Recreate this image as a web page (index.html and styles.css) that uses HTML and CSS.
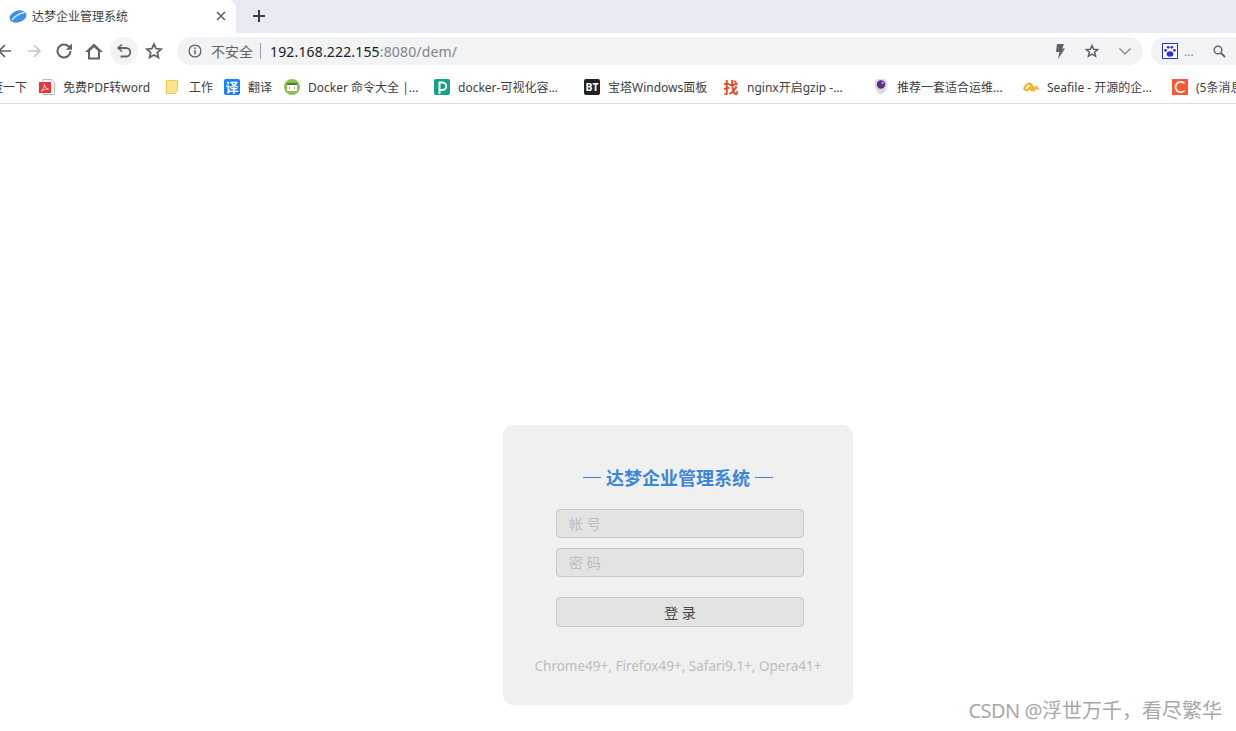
FILE: index.html
```html
<!DOCTYPE html>
<html lang="zh-CN">
<head>
  <meta charset="UTF-8" />
  <title>达梦企业管理系统</title>
  <link rel="stylesheet" href="styles.css">
</head>
<body>

<div class="tabstrip">
  <div class="tab">
    <svg class="tab-icon" width="18" height="15" viewBox="0 0 18 15"><ellipse cx="9" cy="7.500" rx="8.600" ry="5.800" transform="rotate(-18 9 7.500)" fill="#3d8fe0"/><path d="M3 11C6 7 10 4.500 15.500 3.500" stroke="#d5e8fa" stroke-width="1.300" fill="none"/></svg>
    <span class="tab-title">达梦企业管理系统</span>
    <svg class="tab-close" width="10" height="10" viewBox="0 0 10 10"><path d="M1 1l8 8M9 1l-8 8" stroke="#5f6368" stroke-width="1.600"/></svg>
  </div>
  <svg class="tab-new" width="14" height="14" viewBox="0 0 14 14"><path d="M7 1v12M1 7h12" stroke="#3c4043" stroke-width="2"/></svg>
</div>

<div class="toolbar">
  <div class="nav-icons">
    <svg class="back" width="16" height="16" viewBox="0 0 16 16"><path d="M15 8H3M9 2L3 8l6 6" stroke="#5f6368" stroke-width="1.700" fill="none"/></svg>
    <svg width="16" height="16" viewBox="0 0 16 16"><path d="M2 8h12M8 2l6 6-6 6" stroke="#c4c6c9" stroke-width="1.700" fill="none"/></svg>
    <svg class="reload" width="18" height="18" viewBox="0 0 18 18"><path d="M15.500 9a6.500 6.500 0 1 1-2-4.700L15.500 6.400" stroke="#5f6368" stroke-width="2" fill="none"/><path d="M17 1.500v6.200h-6.200z" fill="#5f6368"/></svg>
    <svg width="18" height="17" viewBox="0 0 18 17"><path d="M9 .5L0 9h3v7.500h12V9h3zM5 14.500V8l4-3.800L13 8v6.500z" fill="#5f6368" fill-rule="evenodd"/></svg>
    <span class="undo-wrap"><svg width="16" height="16" viewBox="0 0 16 16"><path d="M6 1.500L2 5l4 3.500" stroke="#5f6368" stroke-width="1.600" fill="none"/><path d="M2.500 5H10a4 4 0 0 1 0 8.500H4.500" stroke="#5f6368" stroke-width="1.800" fill="none"/></svg></span>
    <svg width="18" height="18" viewBox="0 0 18 18"><path d="M9 2l2.100 4.700 5.100.5-3.900 3.400 1.200 5L9 13l-4.500 2.600 1.200-5-3.900-3.400 5.100-.5z" stroke="#5f6368" stroke-width="1.700" fill="none"/></svg>
  </div>
  <div class="address">
    <svg class="info" width="14" height="14" viewBox="0 0 14 14"><circle cx="7" cy="7" r="5.900" stroke="#5f6368" stroke-width="1.300" fill="none"/><path d="M7 6v4.200" stroke="#5f6368" stroke-width="1.500"/><circle cx="7" cy="4.200" r=".9" fill="#5f6368"/></svg>
    <span class="insecure">不安全</span>
    <span class="divider"></span>
    <span class="url">192.168.222.155<span class="url-rest">:8080/dem/</span></span>
    <span class="address-right">
      <svg width="10" height="15" viewBox="0 0 10 15"><path d="M2 0h7L7.200 4.500 10 4.500 3 15l1.300-7H1z" fill="#5f6368"/></svg>
      <svg width="14" height="14" viewBox="0 0 18 18"><path d="M9 2l2.100 4.700 5.100.5-3.900 3.400 1.200 5L9 13l-4.500 2.600 1.200-5-3.900-3.400 5.100-.5z" stroke="#5f6368" stroke-width="2" fill="none"/></svg>
      <svg width="12" height="7" viewBox="0 0 12 7"><path d="M.5.5L6 6l5.500-5.500" stroke="#777" stroke-width="1.100" fill="none"/></svg>
    </span>
  </div>
  <div class="search-box">
    <svg width="16" height="16" viewBox="0 0 16 16"><rect x=".5" y=".5" width="15" height="15" fill="#fff" stroke="#2932e1"/><ellipse cx="8" cy="11" rx="3.400" ry="2.800" fill="#2932e1"/><circle cx="3.600" cy="7.300" r="1.400" fill="#2932e1"/><circle cx="6.200" cy="4.300" r="1.400" fill="#2932e1"/><circle cx="9.800" cy="4.300" r="1.400" fill="#2932e1"/><circle cx="12.400" cy="7.300" r="1.400" fill="#2932e1"/></svg>
    <span class="search-dots">...</span>
    <svg class="search-glass" width="13" height="13" viewBox="0 0 13 13"><circle cx="5" cy="5" r="3.800" stroke="#5f6368" stroke-width="1.400" fill="none"/><path d="M8 8l4 4" stroke="#5f6368" stroke-width="1.800"/></svg>
  </div>
</div>

<div class="bookmarks">
  <span class="bm">度一下</span>
  <span class="bm"><svg width="16" height="16" viewBox="0 0 16 16"><path d="M4 .5h8l3.500 3v12H4z" fill="#fff" stroke="#bbb"/><path d="M10 6h4M10 9h4M10 12h4" stroke="#ccc"/><rect x="0" y="3" width="12" height="11" fill="#e5383b"/><path d="M2 12c2-1 3.500-4 3.500-7 0 3 1.500 4.500 4 5-3 0-5.500 1-7.500 2z" stroke="#fff" stroke-width=".8" fill="none"/></svg>免费PDF转word</span>
  <span class="bm"><svg width="16" height="16" viewBox="0 0 16 16"><path d="M1.500 1.500h11v10.500l-2.500 2.500H1.500z" fill="#fee28f" stroke="#f1c94f"/></svg>工作</span>
  <span class="bm"><span class="fav-yi">译</span>翻译</span>
  <span class="bm"><svg width="16" height="16" viewBox="0 0 16 16"><circle cx="8" cy="8" r="8" fill="#8cc152"/><rect x="3" y="4" width="10" height="8" rx="1" fill="#fff"/><rect x="3" y="4" width="10" height="2" fill="#4f7d2c"/><path d="M6 8L5 9l1 1M10 8l1 1-1 1" stroke="#777" stroke-width=".7" fill="none"/></svg>Docker 命令大全 |...</span>
  <span class="bm"><svg width="16" height="16" viewBox="0 0 16 16"><rect width="16" height="16" rx="2" fill="#13a286"/><path d="M5.500 15V3.500h3a3.500 3.500 0 0 1 0 7.500h-3" stroke="#fff" stroke-width="2" fill="none"/></svg>docker-可视化容...</span>
  <span class="bm"><svg width="16" height="16" viewBox="0 0 16 16"><rect width="16" height="16" rx="2" fill="#222"/><text x="8" y="12" class="bt-mark">BT</text></svg>宝塔Windows面板</span>
  <span class="bm"><span class="fav-zhao">找</span>nginx开启gzip -...</span>
  <span class="bm"><svg width="16" height="16" viewBox="0 0 16 16"><path d="M1.500 5a6.500 6.500 0 0 1 13 0c0 5-3 9-6.500 10.500C4.500 14 1.500 10 1.500 5z" fill="#d8dcdc"/><circle cx="8" cy="5.500" r="4.200" fill="#5f2c8c"/><circle cx="9.500" cy="4" r="1.200" fill="#b99ad6"/></svg>推荐一套适合运维...</span>
  <span class="bm"><svg width="16" height="16" viewBox="0 0 16 16"><path d="M1 10C2 7 4 5 6.500 4.500 9 6 10 8 11 11l2-3 2.500 2.500M1 10l3 1.500L7 8.500 9.500 12" stroke="#fbb022" stroke-width="2.200" fill="none"/></svg>Seafile - 开源的企...</span>
  <span class="bm"><svg width="16" height="16" viewBox="0 0 16 16"><rect width="16" height="16" fill="#fc5531"/><path d="M12.500 4.500A5.200 5.200 0 1 0 12.500 11.500" stroke="#fff" stroke-width="1.800" fill="none"/></svg>(5条消息) CSDN</span>
</div>

<main class="page">
  <div class="login-card">
    <h2 class="login-title"><span class="dash"></span>达梦企业管理系统<span class="dash"></span></h2>
    <div class="login-field">帐 号</div>
    <div class="login-field">密 码</div>
    <div class="login-btn">登 录</div>
    <p class="login-tip">Chrome49+, Firefox49+, Safari9.1+, Opera41+</p>
  </div>
</main>

<div class="watermark"><span class="wm-latin">CSDN @</span>浮世万千，看尽繁华</div>

</body>
</html>
```

FILE: styles.css
```css
* {
  box-sizing: border-box;
}

html, body {
  height: 100%;
}

body {
  margin: 0;
  background-color: #ffffff;
  font-family: "Noto Sans", "Noto Sans CJK SC", sans-serif;
  font-size: 12px;
  color: #3c4043;
  overflow: hidden;
  display: flex;
  flex-direction: column;
}

svg {
  flex-shrink: 0;
}

/* tab strip */
.tabstrip {
  height: 33px;
  background-color: #e8ebf4;
  display: flex;
  align-items: center;
}

.tab {
  width: 236px;
  height: 33px;
  background-color: #ffffff;
  border-radius: 0 8px 0 0;
  display: flex;
  align-items: center;
  padding: 0 10px 1px 9px;
}

.tab-title {
  margin-left: 5px;
  flex: 1;
  color: #3c4043;
}

.tab-new {
  margin: 0 0 1px 16px;
}

/* toolbar */
.toolbar {
  height: 37px;
  background-color: #ffffff;
  display: flex;
  align-items: center;
  padding-bottom: 1px;
}

.nav-icons {
  width: 177px;
  display: flex;
  align-items: center;
  gap: 12px;
  padding-left: 26px;
  position: relative;
}

.nav-icons .back {
  position: absolute;
  left: -4px;
}

.nav-icons .reload {
  margin-left: 1px;
}

.undo-wrap {
  width: 28px;
  height: 28px;
  border-radius: 50%;
  background-color: #f3f3f3;
  display: flex;
  align-items: center;
  justify-content: center;
  margin: 0 -5px;
}

.address {
  width: 966px;
  height: 28px;
  border-radius: 14px;
  background-color: #f1f3f4;
  display: flex;
  align-items: center;
  padding: 0 12px 0 11px;
}

.insecure {
  margin-left: 9px;
  font-size: 14px;
  color: #5f6368;
}

.divider {
  width: 1px;
  height: 16px;
  background-color: #9aa0a6;
  margin: 0 9px 0 7px;
}

.url {
  font-size: 14px;
  letter-spacing: 0.16px;
  color: #202124;
}

.url-rest {
  color: #80868b;
}

.address-right {
  margin-left: auto;
  display: flex;
  align-items: center;
  gap: 20px;
}

.search-box {
  width: 85px;
  height: 28px;
  margin-left: 8px;
  border-radius: 14px 0 0 14px;
  background-color: #f1f3f4;
  display: flex;
  align-items: center;
  padding-left: 11px;
}

.search-dots {
  margin-left: 6px;
  color: #80868b;
}

.search-glass {
  margin-left: 19px;
}

/* bookmarks */
.bookmarks {
  height: 34px;
  border-bottom: 1px solid #dadce0;
  background-color: #ffffff;
  display: grid;
  grid-template-columns: 48px 126px 59px 60px 150px 150px 139px 150px 150px 149px 120px;
  align-items: center;
  margin-left: -9px;
  white-space: nowrap;
  overflow: hidden;
}

.bm {
  display: flex;
  align-items: center;
  gap: 8px;
  color: #3c4043;
}

.bt-mark {
  font-size: 10.500px;
  font-weight: bold;
  fill: #ffffff;
  text-anchor: middle;
}

.fav-yi {
  width: 16px;
  height: 16px;
  border-radius: 2px;
  background-color: #1683f2;
  color: #ffffff;
  font-size: 13px;
  font-weight: bold;
  line-height: 16px;
  text-align: center;
}

.fav-zhao {
  width: 16px;
  height: 16px;
  color: #dd4a2a;
  font-size: 15px;
  font-weight: bold;
  line-height: 16px;
  text-align: center;
}

/* login */
.page {
  flex: 1;
  padding: 321px 0 0 503px;
}

.login-card {
  width: 350px;
  height: 280px;
  background-color: #f0f0f0;
  border-radius: 10px;
  padding-top: 39px;
  display: flex;
  flex-direction: column;
  align-items: center;
}

.login-title {
  margin: 0 0 19px;
  height: 26px;
  display: flex;
  align-items: center;
  gap: 5px;
  font-size: 18px;
  font-weight: bold;
  color: #3b86d8;
}

.dash {
  width: 18px;
  height: 1px;
  background-color: #3b86d8;
}

.login-field {
  width: 248px;
  height: 29px;
  margin: 0 0 10px 4px;
  padding-left: 12px;
  border: 1px solid #c8c8c8;
  border-radius: 4px;
  background-color: #e3e3e3;
  color: #bdbdbd;
  font-size: 14px;
  line-height: 27px;
}

.login-btn {
  width: 248px;
  height: 30px;
  margin: 10px 0 0 4px;
  border: 1px solid #c8c8c8;
  border-radius: 4px;
  background-color: #e3e3e3;
  color: #444444;
  font-size: 14px;
  line-height: 29px;
  text-align: center;
}

.login-tip {
  margin: 30px 0 0;
  font-size: 13.500px;
  color: #bdbdbd;
}

.watermark {
  position: absolute;
  right: 14px;
  bottom: 7px;
  font-size: 20px;
  color: #a8a8a8;
}

.wm-latin {
  letter-spacing: -0.5px;
}
```
